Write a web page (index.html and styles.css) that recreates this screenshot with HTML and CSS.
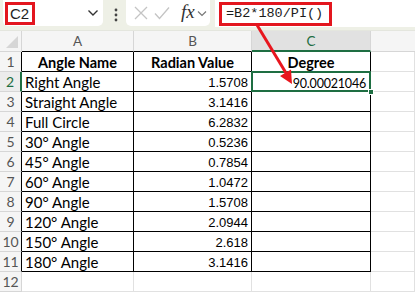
FILE: index.html
```html
<!DOCTYPE html>
<html lang="en">
<head>
    <meta charset="UTF-8">
    <title>Degree formula</title>
    <link rel="stylesheet" href="styles.css">
</head>
<body>
    <div class="toolbar">
        <div class="namebox">
            <span class="mark cellref">C2</span>
            <svg class="chev" width="12" height="8" viewBox="0 0 12 8"><polyline points="1.5,1.5 6,6 10.5,1.5" fill="none" stroke="#333" stroke-width="1.4"/></svg>
        </div>
        <svg class="dots" width="4" height="14" viewBox="0 0 4 14"><circle cx="2" cy="2" r="1.4" fill="#444"/><circle cx="2" cy="7" r="1.4" fill="#444"/><circle cx="2" cy="12" r="1.4" fill="#444"/></svg>
        <div class="fbuttons">
            <svg width="14" height="14" viewBox="0 0 14 14"><path d="M1 1 L13 13 M13 1 L1 13" stroke="#c4c4c4" stroke-width="1.3"/></svg>
            <svg width="16" height="14" viewBox="0 0 16 14"><polyline points="1,7.5 5.5,12.5 15,1.5" fill="none" stroke="#c4c4c4" stroke-width="1.3"/></svg>
            <span class="fx">fx</span>
            <svg class="chev-sm" width="10" height="7" viewBox="0 0 10 7"><polyline points="1,1.5 5,5.5 9,1.5" fill="none" stroke="#777" stroke-width="1.2"/></svg>
        </div>
        <div class="formula">
            <span class="mark ftext">=B2*180/PI()</span>
        </div>
    </div>

    <div class="sheet">
        <div class="corner"><svg width="12" height="12" viewBox="0 0 12 12"><polygon points="12,0 12,12 0,12" fill="#d6d6d6"/></svg></div>
        <div class="colhead">A</div>
        <div class="colhead">B</div>
        <div class="colhead sel">C</div>
        <div class="colhead last"></div>

        <div class="rowhead tb">1</div>
        <div class="cell t th">Angle Name</div>
        <div class="cell t th">Radian Value</div>
        <div class="cell t th">Degree</div>
        <div class="cell"></div>

        <div class="rowhead tb cur">2</div>
        <div class="cell t">Right Angle</div>
        <div class="cell t num">1.5708</div>
        <div class="cell t active"><span class="result">90.00021046</span><span class="handle"></span></div>
        <div class="cell"></div>

        <div class="rowhead tb">3</div>
        <div class="cell t">Straight Angle</div>
        <div class="cell t num">3.1416</div>
        <div class="cell t"></div>
        <div class="cell"></div>

        <div class="rowhead tb">4</div>
        <div class="cell t">Full Circle</div>
        <div class="cell t num">6.2832</div>
        <div class="cell t"></div>
        <div class="cell"></div>

        <div class="rowhead tb">5</div>
        <div class="cell t">30° Angle</div>
        <div class="cell t num">0.5236</div>
        <div class="cell t"></div>
        <div class="cell"></div>

        <div class="rowhead tb">6</div>
        <div class="cell t">45° Angle</div>
        <div class="cell t num">0.7854</div>
        <div class="cell t"></div>
        <div class="cell"></div>

        <div class="rowhead tb">7</div>
        <div class="cell t">60° Angle</div>
        <div class="cell t num">1.0472</div>
        <div class="cell t"></div>
        <div class="cell"></div>

        <div class="rowhead tb">8</div>
        <div class="cell t">90° Angle</div>
        <div class="cell t num">1.5708</div>
        <div class="cell t"></div>
        <div class="cell"></div>

        <div class="rowhead tb">9</div>
        <div class="cell t">120° Angle</div>
        <div class="cell t num">2.0944</div>
        <div class="cell t"></div>
        <div class="cell"></div>

        <div class="rowhead tb">10</div>
        <div class="cell t">150° Angle</div>
        <div class="cell t num">2.618</div>
        <div class="cell t"></div>
        <div class="cell"></div>

        <div class="rowhead tb">11</div>
        <div class="cell t">180° Angle</div>
        <div class="cell t num">3.1416</div>
        <div class="cell t"></div>
        <div class="cell"></div>

        <div class="rowhead">12</div>
        <div class="cell"></div>
        <div class="cell"></div>
        <div class="cell"></div>
        <div class="cell"></div>
    </div>

    <!-- callout arrow from the formula to the result -->
    <svg class="arrow" width="415" height="293" viewBox="0 0 415 293">
        <line x1="257" y1="25" x2="286" y2="73" stroke="#e8161e" stroke-width="3"/>
        <polygon points="292,84 280,76 291,69.5" fill="#e8161e"/>
    </svg>
</body>
</html>
```

FILE: styles.css
```css
* {
    box-sizing: border-box;
}

body {
    margin: 0;
    width: 415px;
    height: 293px;
    overflow: hidden;
    background-color: #ffffff;
    font-family: Lato, "Open Sans", sans-serif;
    color: #000;
    position: relative;
}

/* formula bar */
.toolbar {
    height: 31px;
    background-color: #eef0e6;
    display: flex;
    align-items: flex-start;
    border-bottom: 1px solid #e4e6de;
}

.namebox {
    width: 100px;
    height: 26px;
    margin-left: 3px;
    background-color: #fff;
    border-radius: 0 0 5px 5px;
    display: flex;
    align-items: center;
    justify-content: space-between;
    padding: 0 4px 0 2px;
}

.mark {
    border: 3px solid #e3161e;
    display: inline-block;
}

.cellref {
    width: 30px;
    height: 23px;
    margin-top: 1px;
    font-family: "Liberation Sans", Arial, sans-serif;
    font-size: 15px;
    line-height: 17px;
    padding-left: 2px;
    color: #1f1f1f;
}

.dots {
    margin: 8px 8px 0 11px;
}

.fbuttons {
    width: 84px;
    height: 26px;
    background-color: #fff;
    border-radius: 0 0 5px 5px;
    display: flex;
    align-items: center;
    gap: 6px;
    padding-left: 8px;
}

.fx {
    font-family: "Liberation Serif", serif;
    font-style: italic;
    font-size: 19px;
    color: #333;
    margin-left: 5px;
    margin-top: -2px;
}

.chev-sm {
    margin-left: -4px;
}

.formula {
    flex: 1;
    height: 27px;
    margin-left: 5px;
    background-color: #fff;
    padding: 1px 0 0 4px;
}

.ftext {
    height: 24px;
    padding: 0 6px 0 4px;
    font-family: "Liberation Mono", "DejaVu Sans Mono", monospace;
    font-size: 13.5px;
    line-height: 18px;
    color: #1b1b1b;
}

/* grid */
.sheet {
    display: grid;
    grid-template-columns: 22px 112px 118px 119px 1fr;
    grid-template-rows: 21px repeat(12, 20px);
}

.corner,
.colhead,
.rowhead {
    background-color: #f5f5f5;
    color: #555;
    font-size: 13.5px;
    border-right: 1px solid #d6d6d6;
    border-bottom: 1px solid #d6d6d6;
}

.corner {
    display: flex;
    align-items: flex-end;
    justify-content: flex-end;
    padding: 0 3px 3px 0;
}

.colhead {
    text-align: center;
    line-height: 20px;
    border-bottom-color: #000;
}

.colhead.last {
    border-bottom-color: #d6d6d6;
    border-right: none;
}

.colhead.sel {
    background-color: #e1e1e1;
    color: #1e6e42;
    border-bottom: 2px solid #1e6e42;
}

.rowhead {
    text-align: center;
    line-height: 20px;
    font-size: 14px;
}

.rowhead.tb {
    border-right-color: #000;
}

.rowhead.cur {
    color: #1e6e42;
    border-right: 2px solid #1e6e42;
    background-color: #ececec;
}

.cell {
    border-right: 1px solid #e1e1e1;
    border-bottom: 1px solid #e1e1e1;
    font-size: 15px;
    line-height: 21px;
    padding: 0 3px;
    white-space: nowrap;
}

.cell.t {
    border-right-color: #000;
    border-bottom-color: #000;
}

.th {
    font-weight: bold;
    font-size: 14.5px;
    text-align: center;
}

.num {
    text-align: right;
    font-family: "Liberation Sans", Arial, sans-serif;
    font-size: 13px;
}

.active {
    position: relative;
    text-align: right;
    padding-right: 4px;
}

.active::after {
    content: "";
    position: absolute;
    left: -1px;
    top: -1px;
    right: -1px;
    bottom: -1px;
    border: 2px solid #1e6e42;
}

.result {
    font-size: 12.5px;
    letter-spacing: -0.2px;
}

.handle {
    position: absolute;
    right: -4px;
    bottom: -4px;
    width: 6px;
    height: 6px;
    background-color: #1e6e42;
    border: 1px solid #fff;
    z-index: 2;
}

.arrow {
    position: absolute;
    left: 0;
    top: 0;
    pointer-events: none;
}
```
